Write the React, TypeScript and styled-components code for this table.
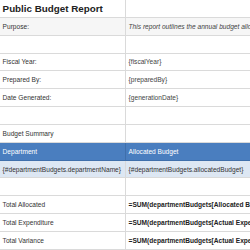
import React from "react";
import styled, { createGlobalStyle } from "styled-components";

const Global = createGlobalStyle`
  html, body { margin: 0; padding: 0; background: #ffffff; overflow: hidden; }
  body { font-family: "Liberation Sans", Arial, sans-serif; }
`;

const Sheet = styled.div`
  display: grid;
  grid-template-columns: 126px 300px;
  grid-auto-rows: 17.85px;
  width: 426px;
`;

type CellProps = {
  $variant?: "title" | "label" | "value" | "note" | "head" | "data" | "formula";
  $shade?: boolean;
};

const Cell = styled.div<CellProps>`
  box-sizing: border-box;
  display: flex;
  align-items: center;
  padding: 0 2.6px;
  white-space: nowrap;
  overflow: hidden;
  border-right: 1px solid #dadada;
  border-bottom: 1px solid #dadada;
  font-size: 6.6px;
  color: #333333;
  background: ${(p) =>
    p.$variant === "head"
      ? "#4a7ebf"
      : p.$variant === "data"
      ? "#dde7f3"
      : p.$shade
      ? "#f6f6f6"
      : "#ffffff"};
  ${(p) =>
    p.$variant === "title" &&
    `font-size: 9.8px; font-weight: bold; color: #222222;`}
  ${(p) => p.$variant === "note" && `font-style: italic; color: #444444;`}
  ${(p) => p.$variant === "value" && `color: #444444;`}
  ${(p) => p.$variant === "head" && `color: #ffffff; border-color: #3f6fab;`}
  ${(p) => p.$variant === "data" && `color: #333333;`}
  ${(p) => p.$variant === "formula" && `font-weight: bold; color: #222222;`}
`;

export default function App() {
  return (
    <>
      <Global />
      <Sheet>
        <Cell $variant="title">Public Budget Report</Cell>
        <Cell />
        <Cell $variant="label" $shade>Purpose:</Cell>
        <Cell $variant="note" $shade>
          This report outlines the annual budget allocations and expenditures by department.
        </Cell>
        <Cell />
        <Cell />
        <Cell $variant="label">Fiscal Year:</Cell>
        <Cell $variant="value">{"{fiscalYear}"}</Cell>
        <Cell $variant="label">Prepared By:</Cell>
        <Cell $variant="value">{"{preparedBy}"}</Cell>
        <Cell $variant="label">Date Generated:</Cell>
        <Cell $variant="value">{"{generationDate}"}</Cell>
        <Cell />
        <Cell />
        <Cell $variant="label">Budget Summary</Cell>
        <Cell />
        <Cell $variant="head">Department</Cell>
        <Cell $variant="head">Allocated Budget</Cell>
        <Cell $variant="data">{"{#departmentBudgets.departmentName}"}</Cell>
        <Cell $variant="data">{"{#departmentBudgets.allocatedBudget}"}</Cell>
        <Cell />
        <Cell />
        <Cell $variant="label">Total Allocated</Cell>
        <Cell $variant="formula">=SUM(departmentBudgets[Allocated Budget])</Cell>
        <Cell $variant="label">Total Expenditure</Cell>
        <Cell $variant="formula">=SUM(departmentBudgets[Actual Expenditure])</Cell>
        <Cell $variant="label">Total Variance</Cell>
        <Cell $variant="formula">=SUM(departmentBudgets[Actual Expenditure])</Cell>
      </Sheet>
    </>
  );
}
